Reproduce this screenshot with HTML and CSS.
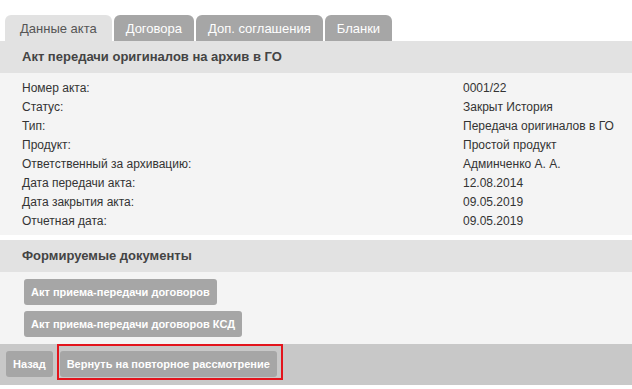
FILE: index.html
```html
<!DOCTYPE html>
<html lang="ru">

<head>
    <meta charset="UTF-8">
    <title>Данные акта</title>
    <link rel="stylesheet" href="styles.css">
</head>

<body>
    <ul class="tabs">
        <li class="tab active">Данные акта</li>
        <li class="tab">Договора</li>
        <li class="tab">Доп. соглашения</li>
        <li class="tab">Бланки</li>
    </ul>

    <div class="section-title">Акт передачи оригиналов на архив в ГО</div>
    <div class="details">
        <div>Номер акта:</div><div>0001/22</div>
        <div>Статус:</div><div>Закрыт История</div>
        <div>Тип:</div><div>Передача оригиналов в ГО</div>
        <div>Продукт:</div><div>Простой продукт</div>
        <div>Ответственный за архивацию:</div><div>Админченко А. А.</div>
        <div>Дата передачи акта:</div><div>12.08.2014</div>
        <div>Дата закрытия акта:</div><div>09.05.2019</div>
        <div>Отчетная дата:</div><div>09.05.2019</div>
    </div>

    <div class="section-title docs-title">Формируемые документы</div>
    <div class="docs">
        <button class="btn">Акт приема-передачи договоров</button>
        <button class="btn">Акт приема-передачи договоров КСД</button>
    </div>

    <div class="footer">
        <button class="btn back">Назад</button>
        <!-- выделено красной рамкой -->
        <div class="marked">
            <button class="btn">Вернуть на повторное рассмотрение</button>
        </div>
    </div>
</body>

</html>
```

FILE: styles.css
```css
body {
    margin: 0;
    font-family: "Liberation Sans", Arial, sans-serif;
    font-size: 12px;
    color: #333;
    background: #fff;
}

.tabs {
    display: flex;
    gap: 2px;
    margin: 0;
    padding: 15px 0 0 5px;
    list-style: none;
}

.tab {
    height: 26px;
    line-height: 27px;
    padding: 0 12px;
    font-size: 13px;
    color: #fff;
    background: #a6a6a6;
    border-radius: 6px 6px 0 0;
}

.tab.active {
    padding: 0 15px;
    color: #555;
    background: #e2e2e2;
}

.section-title {
    height: 32px;
    line-height: 31px;
    padding-left: 22px;
    font-size: 13px;
    font-weight: bold;
    color: #444;
    background: #e2e2e2;
}

.details {
    display: grid;
    grid-template-columns: 441px 1fr;
    grid-auto-rows: 19px;
    align-items: center;
    padding: 5px 0 5px 22px;
    background: #f4f4f4;
}

.docs-title {
    margin-top: 5px;
}

.docs {
    display: flex;
    flex-direction: column;
    align-items: flex-start;
    gap: 6px;
    padding: 7px 24px;
    background: #f4f4f4;
}

.btn {
    height: 26px;
    padding: 0 7px;
    border: none;
    border-radius: 3px;
    font-family: "Liberation Sans", Arial, sans-serif;
    font-size: 11px;
    font-weight: bold;
    color: #fff;
    background: #a6a6a6;
}

.footer {
    display: flex;
    align-items: flex-start;
    height: 41px;
    padding-left: 6px;
    background: #c8c8c8;
}

.back {
    margin-top: 7px;
}

.marked {
    margin-left: 4px;
    padding: 5px 4px 1px 1px;
    border: 2px solid #e3141c;
}
```
